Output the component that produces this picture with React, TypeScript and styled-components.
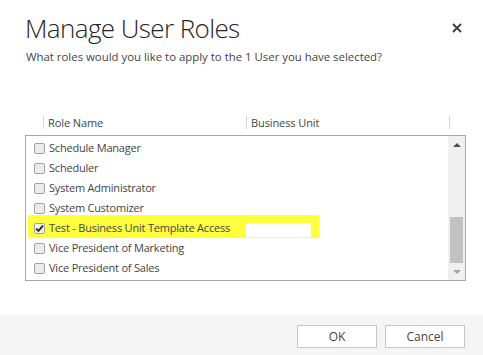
import React from 'react';
import styled, {createGlobalStyle} from 'styled-components';

const GlobalStyle = createGlobalStyle`
    html, body {
        margin: 0;
        padding: 0;
        background: #ffffff;
    }
    body {
        font-family: "Open Sans", "Liberation Sans", sans-serif;
        color: #444444;
    }
`;

interface Role {
    name: string;
    checked?: boolean;
    marked?: boolean;
}

const roles: Role[] = [
    {name: 'Schedule Manager'},
    {name: 'Scheduler'},
    {name: 'System Administrator'},
    {name: 'System Customizer'},
    {name: 'Test - Business Unit Template Access', checked: true, marked: true},
    {name: 'Vice President of Marketing'},
    {name: 'Vice President of Sales'},
];

const CheckIcon = () => (
    <svg width='9' height='9' viewBox='0 0 9 9'>
        <path d='M1.2 4.6 L3.5 6.9 L7.9 1.6' fill='none' stroke='#222' strokeWidth='1.7'/>
    </svg>
);

const CloseIcon = () => (
    <svg width='10' height='10' viewBox='0 0 10 10'>
        <path d='M1 1 L9 9 M9 1 L1 9' stroke='#3c3c3c' strokeWidth='1.8'/>
    </svg>
);

const App = () => {
    return (
        <Page>
            <GlobalStyle/>
            <Header>
                <Titles>
                    <Title>Manage User Roles</Title>
                    <Subtitle>What roles would you like to apply to the 1 User you have selected?</Subtitle>
                </Titles>
                <CloseButton aria-label='Close'><CloseIcon/></CloseButton>
            </Header>
            <Body>
                <GridHeader>
                    <HeaderCell>Role Name</HeaderCell>
                    <HeaderCell>Business Unit</HeaderCell>
                    <HeaderEdge/>
                </GridHeader>
                <GridBox>
                    <Rows>
                        {roles.map((role) => (
                            <Row
                                key={role.name}
                                marked={role.marked}
                            >
                                <NameCell marked={role.marked}>
                                    <Checkbox checked={role.checked}>
                                        {role.checked && <CheckIcon/>}
                                    </Checkbox>
                                    <RoleName>{role.name}</RoleName>
                                </NameCell>
                                <UnitCell>
                                    {role.marked && <Redaction/>}
                                </UnitCell>
                            </Row>
                        ))}
                    </Rows>
                    <ScrollBar>
                        <ScrollArrow>
                            <Arrow up={true}/>
                        </ScrollArrow>
                        <ScrollTrack>
                            <ScrollThumb/>
                        </ScrollTrack>
                        <ScrollArrow>
                            <Arrow up={false}/>
                        </ScrollArrow>
                    </ScrollBar>
                </GridBox>
            </Body>
            <Footer>
                <Button>OK</Button>
                <Button>Cancel</Button>
            </Footer>
        </Page>
    );
};

export default App;

const Page = styled.div`
    width: 483px;
    height: 355px;
    display: flex;
    flex-direction: column;
    background: #ffffff;
    overflow: hidden;
`;

const Header = styled.div`
    display: flex;
    justify-content: space-between;
    align-items: flex-start;
    padding: 10px 20px 0 26px;
`;

const Titles = styled.div`
    display: flex;
    flex-direction: column;
`;

const Title = styled.div`
    font-size: 26px;
    font-weight: 300;
    line-height: 36px;
    color: #262626;
    letter-spacing: -0.6px;
    margin-left: -1px;
`;

const Subtitle = styled.div`
    font-size: 11.4px;
    line-height: 16px;
    margin-top: 3px;
    color: #444444;
`;

const CloseButton = styled.div`
    width: 12px;
    height: 12px;
    margin-top: 12px;
    display: flex;
    align-items: center;
    justify-content: center;
`;

const Body = styled.div`
    flex: 1;
    display: flex;
    flex-direction: column;
    padding: 50px 17px 0 25px;
`;

const GridHeader = styled.div`
    display: flex;
    padding-left: 18px;
    height: 20px;
`;

const HeaderCell = styled.div`
    width: 203px;
    height: 14px;
    border-left: 1px solid #d8d8d8;
    padding-left: 4px;
    box-sizing: border-box;
    font-size: 11px;
    letter-spacing: -0.1px;
    line-height: 15px;
    color: #444444;
`;

const HeaderEdge = styled.div`
    height: 14px;
    border-left: 1px solid #d8d8d8;
`;

const GridBox = styled.div`
    display: flex;
    height: 146px;
    box-sizing: border-box;
    border: 1px solid #a8a8a8;
`;

const Rows = styled.div`
    flex: 1;
    display: flex;
    flex-direction: column;
    padding-top: 2px;
`;

const Row = styled.div<{marked?: boolean}>`
    display: flex;
    align-items: center;
    height: 20px;
    ${({marked}) => marked && `
        background: #ffff3c;
        width: 291px;
        height: 23px;
        margin: -3px 0 0 2px;
        padding: 3px 0 0 0;
        box-sizing: border-box;
    `}
`;

const NameCell = styled.div<{marked?: boolean}>`
    display: flex;
    align-items: center;
    width: 220px;
    padding-left: ${({marked}) => (marked ? 6 : 8)}px;
`;

const Checkbox = styled.div<{checked?: boolean}>`
    width: 11px;
    height: 11px;
    box-sizing: border-box;
    border: 1px solid #a2a2a2;
    border-radius: 2px;
    background: ${({checked}) => (checked ? '#f2f2e8' : '#ececec')};
    display: flex;
    align-items: center;
    justify-content: center;
    margin-right: 4px;
`;

const RoleName = styled.span`
    font-size: 11px;
    letter-spacing: -0.2px;
    line-height: 16px;
    color: #444444;
    white-space: nowrap;
`;

const UnitCell = styled.div`
    flex: 1;
    height: 20px;
    display: flex;
    align-items: flex-end;
`;

const Redaction = styled.div`
    width: 65px;
    height: 14px;
    margin: 0 0 1px -8px;
    background: #ffffff;
`;

const ScrollBar = styled.div`
    width: 17px;
    display: flex;
    flex-direction: column;
    background: #f0f0f0;
`;

const ScrollArrow = styled.div`
    height: 17px;
    display: flex;
    align-items: center;
    justify-content: center;
`;

const Arrow = styled.div<{up: boolean}>`
    width: 0;
    height: 0;
    border-left: 4px solid transparent;
    border-right: 4px solid transparent;
    ${({up}) => (up ? 'border-bottom: 4px solid #505050;' : 'border-top: 4px solid #a0a0a0;')}
`;

const ScrollTrack = styled.div`
    flex: 1;
    display: flex;
    flex-direction: column;
    justify-content: flex-end;
    padding: 0 2px;
`;

const ScrollThumb = styled.div`
    height: 46px;
    background: #c1c1c1;
`;

const Footer = styled.div`
    height: 40px;
    background: #f5f5f5;
    display: flex;
    justify-content: flex-end;
    align-items: flex-start;
    gap: 8px;
    padding: 10px 18px 0 0;
    box-sizing: border-box;
`;

const Button = styled.div`
    width: 80px;
    height: 23px;
    box-sizing: border-box;
    border: 1px solid #c6c6c6;
    background: #ffffff;
    font-size: 12px;
    line-height: 21px;
    text-align: center;
    color: #444444;
`;
